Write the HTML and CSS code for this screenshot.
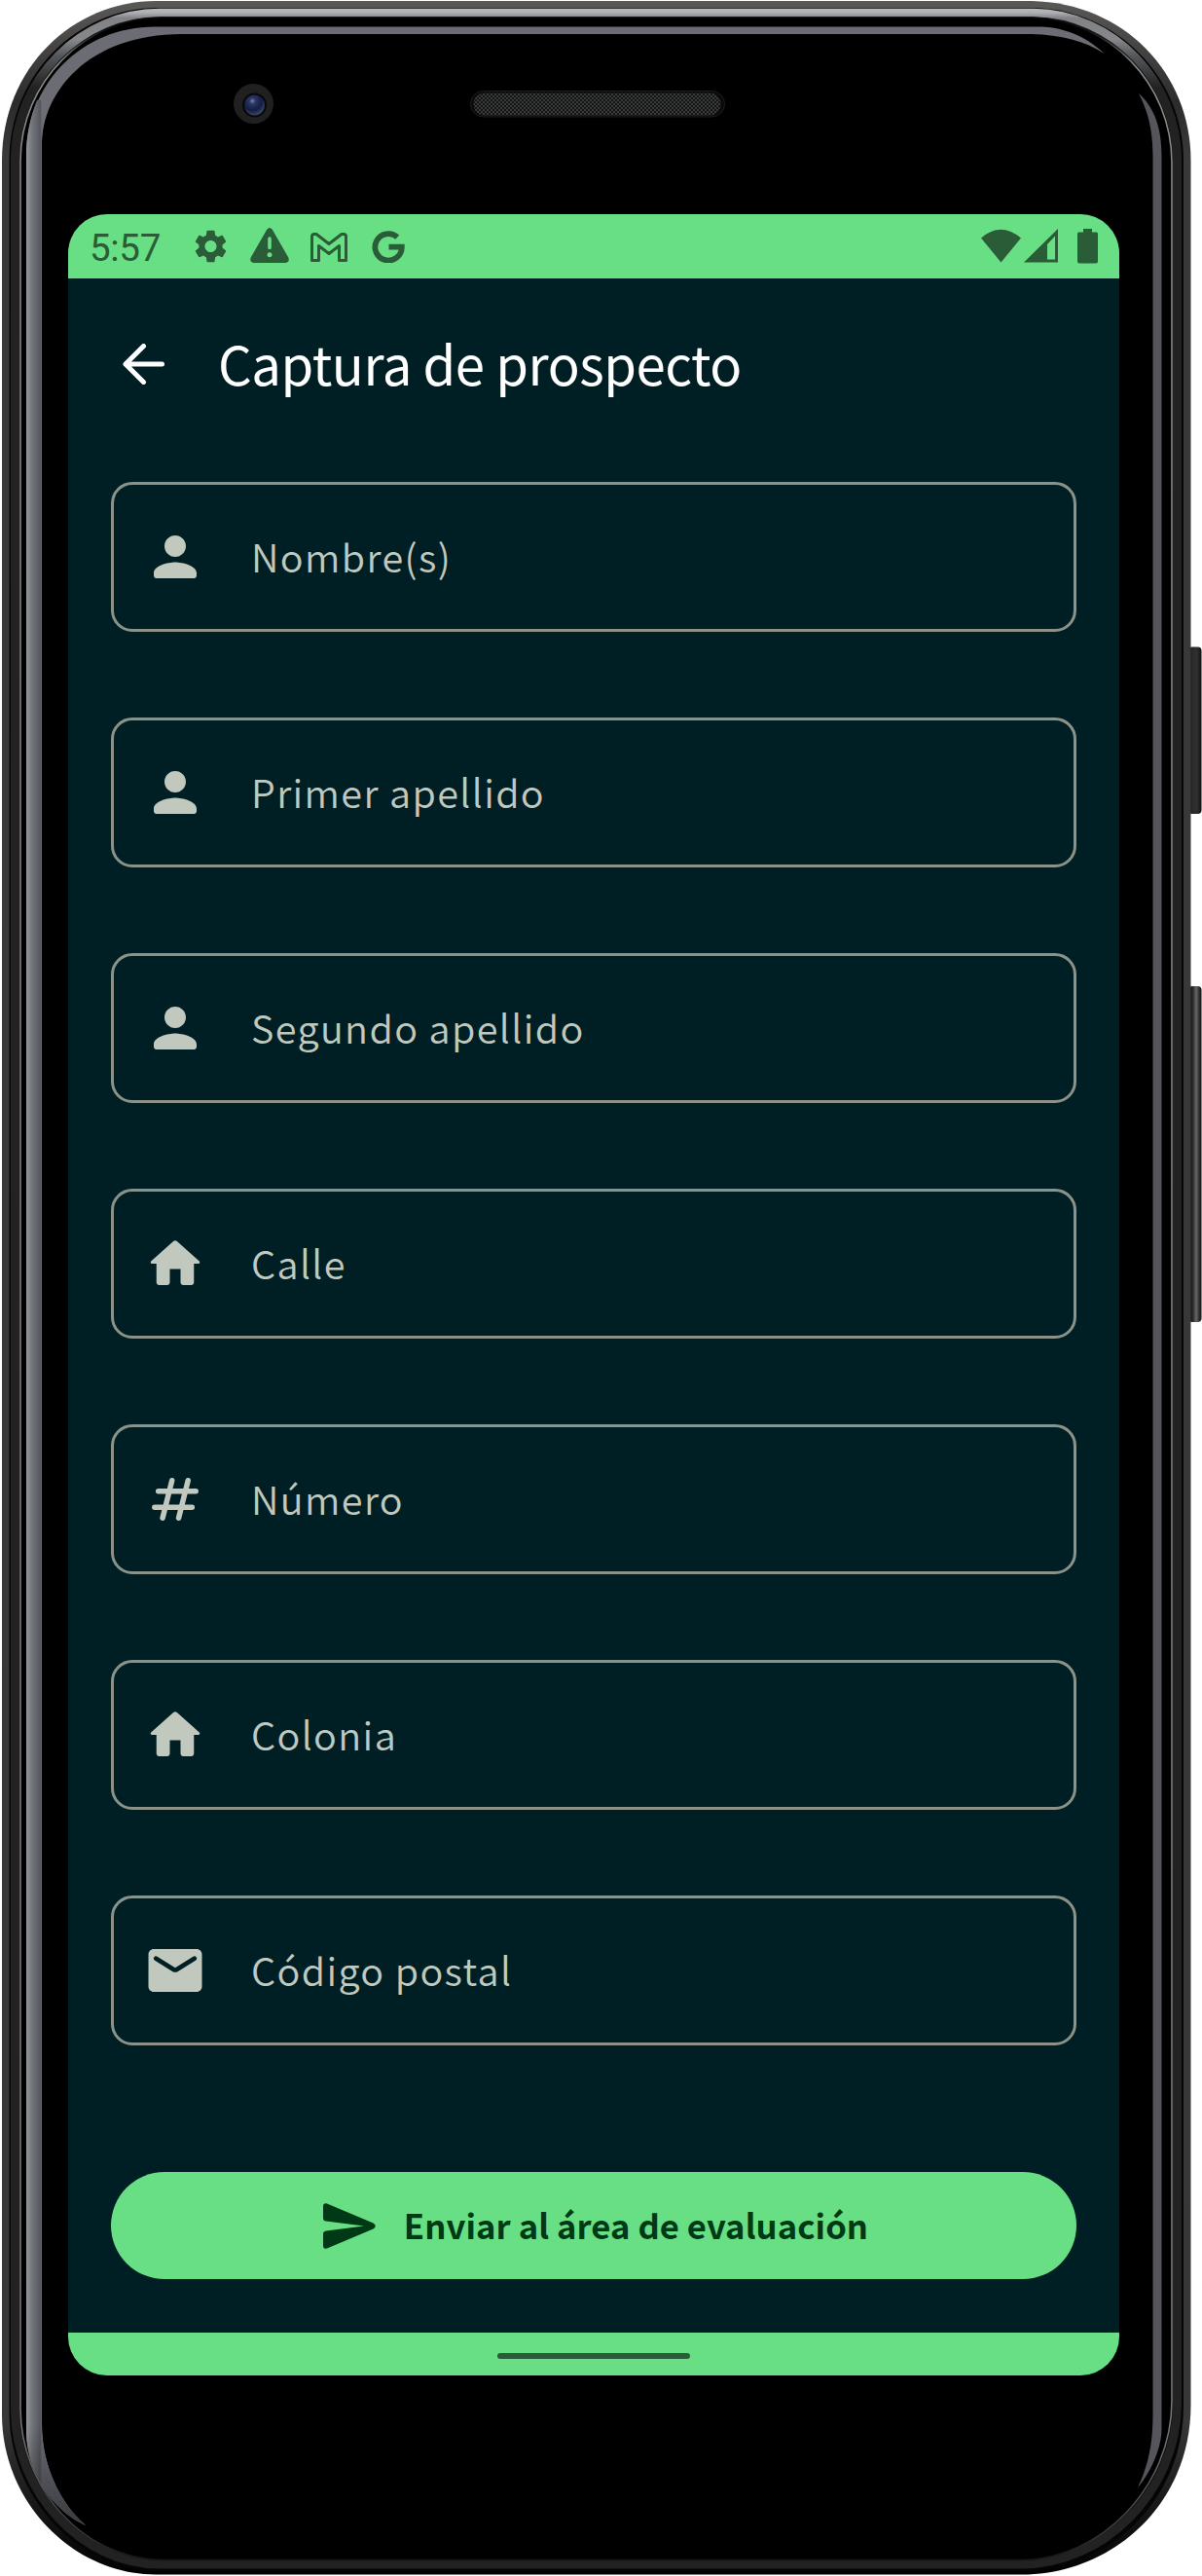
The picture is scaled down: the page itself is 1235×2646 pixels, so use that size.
FILE: index.html
```
<!DOCTYPE html>
<html lang="es">
<head>
<meta charset="utf-8">
<title>Captura de prospecto</title>
<link rel="stylesheet" href="styles.css">
</head>
<body>
<svg width="0" height="0" class="symbols" aria-hidden="true">
  <symbol id="person" viewBox="0 0 24 24"><path d="M12 12c2.21 0 4-1.79 4-4s-1.79-4-4-4-4 1.79-4 4 1.790 4 4 4zm0 2c-2.670 0-8 1.340-8 4v1c0 .55.45 1 1 1h14c.55 0 1-.45 1-1v-1c0-2.660-5.330-4-8-4z"/></symbol>
  <symbol id="home" viewBox="0 0 24 24"><path d="M10 19v-5h4v5c0 .55.45 1 1 1h3c.55 0 1-.45 1-1v-7h1.700c.46 0 .68-.57.33-.87L12.670 3.600c-.38-.34-.96-.34-1.340 0l-8.360 7.530c-.34.3-.13.87.33.87H5v7c0 .55.45 1 1 1h3c.55 0 1-.45 1-1z"/></symbol>
  <symbol id="hash" viewBox="0 0 24 24"><path fill="none" stroke="currentColor" stroke-width="2" stroke-linecap="round" d="M5.700 9h14M4.300 15h14M10.800 5 7.300 19M16.800 5l-3.500 14"/></symbol>
  <symbol id="mail" viewBox="0 0 24 24"><path d="M20 4H4c-1.100 0-1.990.9-1.990 2L2 18c0 1.100.9 2 2 2h16c1.100 0 2-.9 2-2V6c0-1.100-.9-2-2-2zm-.4 4.250-6.540 4.090c-.65.41-1.470.41-2.120 0L4.400 8.250a.85.85 0 1 1 .9-1.440L12 11l6.700-4.190a.85.85 0 1 1 .9 1.440z"/></symbol>
</svg>
<div class="phone">
  <svg class="frame" viewBox="0 0 1235 2646" aria-hidden="true">
    <defs>
      <linearGradient id="rim" gradientUnits="userSpaceOnUse" x1="0" y1="0" x2="0" y2="2646"><stop offset="0" stop-color="#5a5958"/><stop offset=".04" stop-color="#2c2b2b"/><stop offset=".06" stop-color="#3a3838"/><stop offset=".94" stop-color="#383636"/><stop offset=".97" stop-color="#1a1a1a"/><stop offset="1" stop-color="#000"/></linearGradient>
      <linearGradient id="gloss" gradientUnits="userSpaceOnUse" x1="0" y1="8" x2="0" y2="90"><stop offset="0" stop-color="#b9bbbe"/><stop offset=".06" stop-color="#aeb0b3"/><stop offset=".13" stop-color="#818285"/><stop offset=".4" stop-color="#85878b"/><stop offset=".6" stop-color="#55585b"/><stop offset="1" stop-color="#222"/></linearGradient>
      <linearGradient id="hair" gradientUnits="userSpaceOnUse" x1="0" y1="0" x2="0" y2="2646"><stop offset="0" stop-color="#000"/><stop offset=".012" stop-color="#111"/><stop offset=".025" stop-color="#888"/><stop offset=".94" stop-color="#777"/><stop offset=".985" stop-color="#333"/><stop offset="1" stop-color="#000"/></linearGradient>
      <linearGradient id="glassL" gradientUnits="userSpaceOnUse" x1="27" y1="0" x2="43" y2="0"><stop offset="0" stop-color="#96989b"/><stop offset=".35" stop-color="#74777c"/><stop offset=".9" stop-color="#54575d"/><stop offset="1" stop-color="#6c6d75"/></linearGradient>
      <linearGradient id="fadeL" gradientUnits="userSpaceOnUse" x1="0" y1="2490" x2="0" y2="2600"><stop offset="0" stop-color="#000" stop-opacity="0"/><stop offset="1" stop-color="#000" stop-opacity=".5"/></linearGradient>
      <linearGradient id="btn" x1="0" x2="1" y1="0" y2="0"><stop offset="0" stop-color="#0c0c0c"/><stop offset=".3" stop-color="#2b2b2b"/><stop offset=".65" stop-color="#303030"/><stop offset="1" stop-color="#111"/></linearGradient>
      <linearGradient id="btn2" x1="0" x2="1" y1="0" y2="0"><stop offset="0" stop-color="#050505"/><stop offset=".35" stop-color="#2b2b2b"/><stop offset=".6" stop-color="#686868"/><stop offset=".8" stop-color="#333"/><stop offset="1" stop-color="#111"/></linearGradient>
      <radialGradient id="lens" cx=".4" cy=".3" r=".7"><stop offset="0" stop-color="#7884a8"/><stop offset=".22" stop-color="#2b3763"/><stop offset=".65" stop-color="#141d45"/><stop offset="1" stop-color="#3a4a60"/></radialGradient>
      <pattern id="mesh" width="4" height="4" patternUnits="userSpaceOnUse"><rect width="4" height="4" fill="#141515"/><circle cx="1" cy="1" r=".9" fill="#4a4c4b"/><circle cx="3" cy="3" r=".9" fill="#4a4c4b"/></pattern>
    </defs>
    <rect x="1221" y="664.500" width="13.500" height="171.500" rx="4" fill="url(#btn)"/>
    <rect x="1221" y="1013" width="13.500" height="345" rx="4" fill="url(#btn2)"/>
    <path fill="url(#rim)" d="M160 1H1060C1155 3 1223.500 75 1223.500 165V2470C1223.500 2575 1140 2644.500 1050 2644.500H160C75 2644.500 2 2570 2 2480V165C2 70 75 1 160 1Z"/>
    <path fill="#050505" d="M162 8H1062C1148 10 1216 80 1216 165V2472C1216 2568 1138 2641 1050 2641H162C80 2641 9.500 2564 9.500 2478V165C9.500 76 80 8 162 8Z"/>
    <path fill="none" stroke="#222" stroke-width="9" d="M164 14H1062C1145 15 1209.500 84 1209.500 165V2468C1209.500 2560 1133 2634 1050 2634H164C83 2634 15.500 2558 15.500 2476V165C15.500 80 84 14 164 14Z"/>
    <path fill="none" stroke="url(#gloss)" stroke-width="8.500" d="M15.500 165C15.500 80 84 13 164 13H1062C1145 14 1209.500 84 1209.500 165"/>
    <path fill="#000" stroke="url(#hair)" stroke-width="1.600" d="M166 18H1060C1140 20 1204 86 1204 167V2466C1204 2555 1130 2629.500 1050 2629.500H168C84 2629.500 21 2554 21 2474V165C21 84 88 18 166 18Z"/>
    <path fill="#6b6c74" d="M1134.500 55C1115 36 1090 28 1070 27.500H160C85 27 27 85 27 160V2500C29 2545 57 2580 88 2594C60 2570 43 2530 43 2490V150C43 95 90 35 187 35H1060C1090 36 1115 42 1134.500 55Z"/>
    <path fill="url(#glassL)" d="M27 160C27 140 31 120 38 103L52 103C45 120 43 135 43 150V2490C43 2530 60 2570 88 2594C57 2580 29 2545 27 2500Z"/>
    <path fill="url(#fadeL)" d="M27 2490H43C43 2530 60 2570 88 2594C57 2580 29 2545 27 2500Z"/>
    <path fill="#55555b" d="M1170 96C1188 112 1193.500 135 1193.500 160V2495C1193.500 2515 1182 2540 1169 2555C1180 2532 1184.500 2510 1184.500 2480V160C1184.500 130 1178 112 1170 96Z"/>
    <circle cx="260.500" cy="106.500" r="20.500" fill="#202021"/>
    <circle cx="261.500" cy="108" r="12.500" fill="#08080a"/>
    <circle cx="261.500" cy="108" r="10.500" fill="url(#lens)"/>
    <rect x="483.500" y="93.500" width="261" height="26.500" rx="13" fill="#0a0a0b" stroke="#1d1d20"/>
    <rect x="486.500" y="95.500" width="254" height="23" rx="11.500" fill="url(#mesh)"/>
  </svg>
  <main class="screen">
    <div class="status">
      <span class="clock">5:57</span>
      <svg class="s-gear" viewBox="2.200 2 19.600 20"><path d="M19.140 12.940c.04-.3.06-.61.06-.94 0-.32-.02-.64-.07-.94l2.030-1.580c.18-.14.23-.41.12-.61l-1.920-3.320c-.12-.22-.37-.29-.59-.22l-2.390.96c-.5-.38-1.030-.7-1.620-.94l-.36-2.540c-.04-.24-.24-.41-.48-.41h-3.840c-.24 0-.43.17-.47.41l-.36 2.540c-.59.24-1.130.57-1.620.94l-2.390-.96c-.22-.08-.47 0-.59.22L2.740 8.870c-.12.21-.08.47.12.61l2.030 1.580c-.05.3-.09.63-.09.94s.02.64.07.94l-2.030 1.580c-.18.14-.23.41-.12.61l1.920 3.320c.12.22.37.29.59.22l2.390-.96c.5.38 1.030.7 1.620.94l.36 2.540c.05.24.24.41.48.41h3.840c.24 0 .44-.17.47-.41l.36-2.540c.59-.24 1.130-.56 1.620-.94l2.390.96c.22.08.47 0 .59-.22l1.920-3.320c.12-.22.07-.47-.12-.61l-2.010-1.580zM12 15.600c-1.980 0-3.600-1.620-3.600-3.600s1.620-3.600 3.600-3.600 3.600 1.620 3.600 3.600-1.620 3.600-3.600 3.600z"/></svg>
      <svg class="s-warn" viewBox="0 0 40 36"><path fill-rule="evenodd" d="M17.200 1.800Q20-1.600 22.800 1.800L39.300 30.500Q41 35 36.500 36H3.500Q-1 35 .7 30.500ZM18.200 11V20.500a1.800 1.800 0 0 0 3.600 0V11a1.800 1.800 0 0 0-3.600 0ZM20 25.200a2.500 2.500 0 1 0 .01 0Z"/></svg>
      <svg class="s-mail" viewBox="0 0 38 30"><path fill="none" stroke="currentColor" stroke-width="3" stroke-linejoin="round" d="M1.500 28.500V4Q1.500 1.500 4 1.500H6L19 11.500 32 1.500h2Q36.500 1.500 36.500 4V28.500H29.500V13.500L19 21.500 8.500 13.500V28.500Z"/></svg>
      <svg class="s-g" viewBox="0 0 34 34"><path fill="none" stroke="currentColor" stroke-width="5.800" d="M26.300 7.700A13.700 13.700 0 1 0 30.800 17.600H17.500"/></svg>
      <svg class="s-net" viewBox="0 0 120 36"><path d="M0 9.500Q20-8 41 9.500L20.500 34.500Z"/><path fill-rule="evenodd" d="M44 34.500 79 0V34.500ZM68 16V31.500H76V7.500Z"/><path d="M105 0h9v3.500h4.500q1.500 0 1.500 1.500V33.500q0 2-2 2H101q-2 0-2-2V5q0-1.500 1.500-1.500H105Z"/></svg>
    </div>
    <header class="appbar">
      <svg class="back" viewBox="0 0 43 42"><path fill="none" stroke="currentColor" stroke-width="5" stroke-linecap="round" stroke-linejoin="round" d="M40.500 21H3M21.500 2.500 3 21 21.500 39.500"/></svg>
      <h1>Captura de prospecto</h1>
    </header>
    <form class="form">
      <div class="field"><svg><use href="#person"/></svg><span>Nombre(s)</span></div>
      <div class="field"><svg><use href="#person"/></svg><span>Primer apellido</span></div>
      <div class="field"><svg><use href="#person"/></svg><span>Segundo apellido</span></div>
      <div class="field"><svg><use href="#home"/></svg><span>Calle</span></div>
      <div class="field"><svg><use href="#hash"/></svg><span>Número</span></div>
      <div class="field"><svg><use href="#home"/></svg><span>Colonia</span></div>
      <div class="field"><svg><use href="#mail"/></svg><span>Código postal</span></div>
      <button type="button" class="send"><svg viewBox="0 0 54 47"><path d="M4 .4 51.500 20.500Q56 23.500 51.500 26.500L4 46.600Q0 47.500 0 43.500V31.500Q0 29 3 28.500L42 23.500 3 18.500Q0 18 0 15.500V3.500Q0-.5 4 .4Z"/></svg><span>Enviar al área de evaluación</span></button>
    </form>
    <div class="nav"><div class="pill"></div></div>
  </main>
</div>
</body>
</html>
```
FILE: styles.css
```
* { box-sizing: border-box; }
body { margin: 0; background: #fff; font-family: "Noto Sans CJK SC", sans-serif; }
.symbols { position: absolute; }
.phone { position: relative; width: 1235px; height: 2646px; padding: 220px 0 0 70px; overflow: hidden; }
.frame { position: absolute; inset: 0; width: 1235px; height: 2646px; }
.screen { position: relative; display: flex; flex-direction: column; width: 1080px; height: 2220px; overflow: hidden; border-radius: 40px; background: #001f24; }
.status { display: flex; align-items: center; height: 66px; padding: 0 22px 0 22px; background: #69df85; color: #2a5c37; }
.status svg { fill: currentColor; flex: none; }
.clock { width: 108px; font: 400 38.500px/66px Roboto, sans-serif; letter-spacing: -0.300px; padding-top: 3px; }
.s-gear { width: 33px; height: 34px; }
.s-warn { width: 40px; height: 36px; margin: -2px 0 0 24px; }
.s-mail { width: 38px; height: 30px; margin: 2px 0 0 22px; }
.s-g { width: 34px; height: 34px; margin-left: 25px; }
.s-net { width: 120px; height: 36px; margin-left: auto; }
.appbar { display: flex; align-items: center; height: 176px; padding: 0 0 0 56px; color: #fff; }
.back { width: 43px; height: 42px; margin-right: 55px; }
h1 { margin: 0; padding-bottom: 2px; font-weight: 400; font-size: 54.500px; line-height: 80px; letter-spacing: -0.480px; }
.form { flex: 1; display: flex; flex-direction: column; padding: 33px 44px 0; }
.field { display: flex; align-items: center; height: 154px; margin-bottom: 88px; padding-left: 30px; border: 3px solid #8b9389; border-radius: 22px; color: #c1c9be; font-weight: 350; font-size: 39.600px; letter-spacing: 1.375px; }
.field span { padding-bottom: 4px; }
.field svg { width: 66px; height: 66px; margin-right: 45px; fill: currentColor; }
.send { display: flex; align-items: center; justify-content: center; height: 110px; margin-top: 42px; padding: 0 0 0 4px; border: 0; border-radius: 55px; background: #69df85; color: #003916; font: 700 34.650px/50px "Noto Sans CJK SC", sans-serif; letter-spacing: 0.050px; }
.send span { padding-bottom: 2px; }
.send svg { width: 54px; height: 47px; margin-right: 29px; fill: currentColor; }
.nav { display: flex; justify-content: center; height: 44px; padding-top: 21px; background: #69df85; }
.pill { width: 198px; height: 6px; border-radius: 3px; background: #2a5c37; }
```
